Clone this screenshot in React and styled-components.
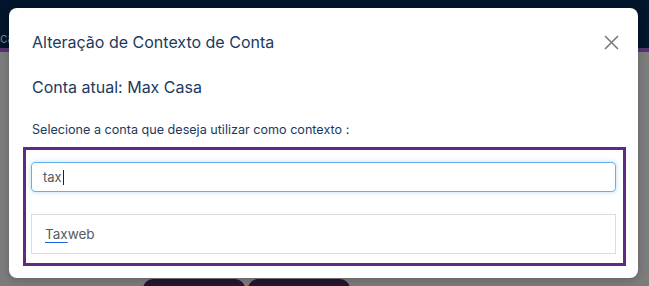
import React from "react";
import styled, { createGlobalStyle } from "styled-components";

const GlobalStyle = createGlobalStyle`
  html, body { margin: 0; padding: 0; }
  body { font-family: Inter, "Noto Sans", sans-serif; background: #7b7b7b; }
  * { box-sizing: border-box; }
`;

const Page = styled.div`
  position: relative;
  width: 649px;
  height: 286px;
  overflow: hidden;
  background: #7c7c7c;
  display: flex;
  flex-direction: column;
`;

const TopBar = styled.div`
  height: 48px;
  background: #02152a;
  display: flex;
  align-items: flex-end;
  padding-bottom: 2px;
`;

const BarText = styled.span`
  font-size: 13px;
  color: #6f7a86;
  margin-left: 0;
  line-height: 16px;
`;

const Strip = styled.div`
  height: 4px;
  background: #533470;
`;

const Backdrop = styled.div`
  flex: 1;
  display: flex;
  flex-direction: column;
  justify-content: flex-end;
`;

const BottomRow = styled.div`
  display: flex;
  gap: 3px;
  padding-left: 143px;
  height: 7px;
  overflow: hidden;
`;

const DarkTab = styled.div`
  width: 102px;
  height: 20px;
  background: #27152f;
  border-radius: 10px 10px 0 0;
`;

const Modal = styled.div`
  position: absolute;
  left: 9px;
  top: 8px;
  width: 629px;
  height: 270px;
  background: #ffffff;
  border-radius: 8px;
  box-shadow: 0 2px 8px rgba(0, 0, 0, 0.2);
  display: flex;
  flex-direction: column;
  padding: 24px 12px 12px 14px;
`;

const Header = styled.div`
  display: flex;
  align-items: center;
  justify-content: space-between;
  padding: 0 7px 0 9px;
  height: 20px;
`;

const Title = styled.h2`
  margin: 0;
  font-size: 16px;
  font-weight: 400;
  color: #1b3a60;
  line-height: 20px;
`;

const CloseButton = styled.button`
  border: 0;
  background: none;
  padding: 0;
  width: 16px;
  height: 16px;
  display: flex;
  align-items: center;
  justify-content: center;
  cursor: pointer;
`;

const Current = styled.p`
  margin: 25px 0 0 9px;
  font-size: 16px;
  line-height: 20px;
  color: #1b3a60;
`;

const Label = styled.p`
  margin: 24px 0 0 9px;
  font-size: 12.6px;
  line-height: 18px;
  color: #1b3a60;
`;

const SelectBox = styled.div`
  margin-top: 8px;
  width: 603px;
  border: 3px solid #5e2987;
  padding: 12px 7px 9px 5px;
  display: flex;
  flex-direction: column;
  gap: 22px;
`;

const SearchField = styled.div`
  height: 30px;
  border: 1px solid #63b0ec;
  border-radius: 4px;
  box-shadow: 0 0 5px rgba(100, 175, 235, 0.45);
  padding-left: 11px;
  display: flex;
  align-items: center;
  font-size: 13px;
  color: #555a60;
`;

const Caret = styled.span`
  display: inline-block;
  width: 1px;
  height: 15px;
  background: #222;
  margin-left: 1px;
`;

const ResultList = styled.div`
  height: 40px;
  border: 1px solid #dcdcdc;
  padding-left: 13px;
  display: flex;
  align-items: center;
  font-size: 13.5px;
  color: #555a60;
`;

const Match = styled.span`
  text-decoration: underline;
  text-decoration-color: #1a5bd8;
  text-underline-offset: 3px;
  text-decoration-thickness: 1px;
`;

export default function App() {
  return (
    <>
      <GlobalStyle />
      <Page>
        <TopBar>
          <BarText>ca</BarText>
        </TopBar>
        <Strip />
        <Backdrop>
          <BottomRow>
            <DarkTab />
            <DarkTab />
          </BottomRow>
        </Backdrop>
        <Modal>
          <Header>
            <Title>Alteração de Contexto de Conta</Title>
            <CloseButton aria-label="Fechar">
              <svg width="15" height="15" viewBox="0 0 15 15">
                <path d="M1 1L14 14M14 1L1 14" stroke="#7a7a7a" strokeWidth="1.6" fill="none" />
              </svg>
            </CloseButton>
          </Header>
          <Current>Conta atual: Max Casa</Current>
          <Label>Selecione a conta que deseja utilizar como contexto :</Label>
          <SelectBox>
            <SearchField>
              tax<Caret />
            </SearchField>
            <ResultList>
              <span>
                <Match>Tax</Match>web
              </span>
            </ResultList>
          </SelectBox>
        </Modal>
      </Page>
    </>
  );
}
